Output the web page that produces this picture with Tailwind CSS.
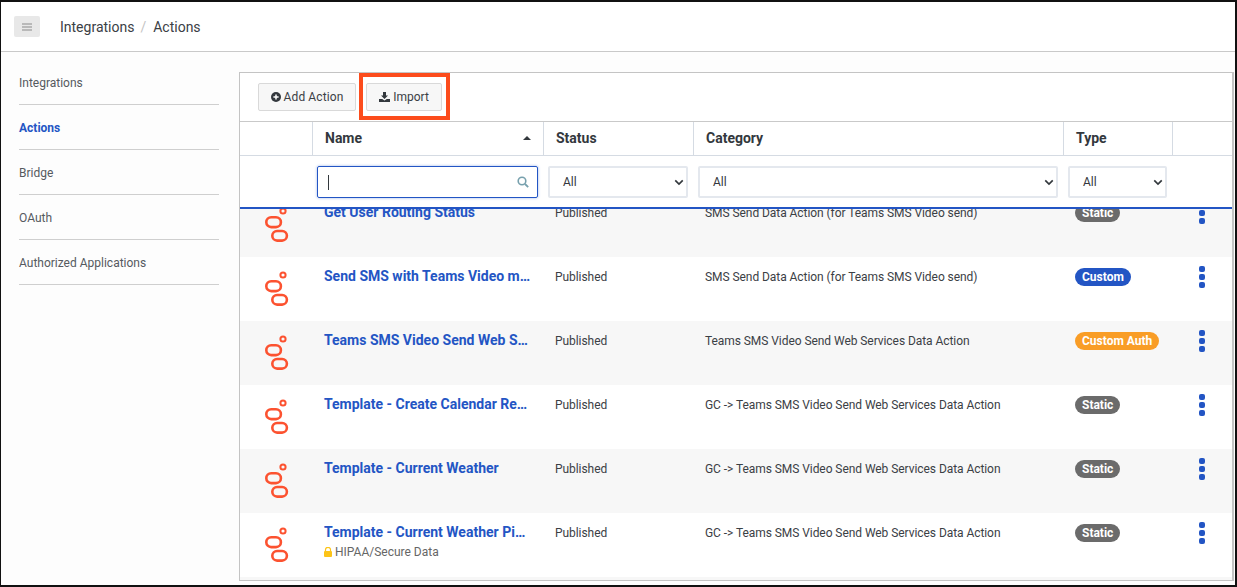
<!DOCTYPE html>
<html lang="en">
<head>
<meta charset="utf-8">
<script src="https://cdn.jsdelivr.net/npm/@tailwindcss/browser@4"></script>
<title>Actions</title>
</head>
<body class="m-0 bg-white">
<svg width="0" height="0" class="absolute">
  <defs>
    <symbol id="logo" viewBox="0 0 24 36">
      <circle cx="18" cy="4" r="2.6" fill="none" stroke="#fc5230" stroke-width="2"/>
      <rect x="1.3" y="10.3" width="14.6" height="9.8" rx="4.9" fill="none" stroke="#fc5230" stroke-width="2.6"/>
      <rect x="7.3" y="24" width="14.6" height="9.6" rx="4.8" fill="none" stroke="#fc5230" stroke-width="2.6"/>
    </symbol>
    <symbol id="dots" viewBox="0 0 7 22">
      <rect x="0" y="0" width="6" height="6" rx="2" fill="#2355c4"/>
      <rect x="0" y="8" width="6" height="6" rx="2" fill="#2355c4"/>
      <rect x="0" y="16" width="6" height="6" rx="2" fill="#2355c4"/>
    </symbol>
    <symbol id="chev" viewBox="0 0 12 8">
      <path d="M1.5 1.5 6 6l4.5-4.5" fill="none" stroke="#33383d" stroke-width="2"/>
    </symbol>
  </defs>
</svg>
<div class="w-[1237px] h-[587px] overflow-hidden flex flex-col border-l border-r-2 border-t-2 border-b-2 border-[#111] bg-[#fdfdfd] font-['Roboto',sans-serif] text-[#33383d]">
  <header class="h-[50px] shrink-0 flex items-center bg-white border-b border-[#c9c9c9]">
    <button class="ml-[13px] w-[26px] h-[21px] rounded-[2px] bg-[#e8e8e8] flex items-center justify-center">
      <svg width="10" height="8" viewBox="0 0 10 8"><path d="M0 1h10M0 4h10M0 7h10" stroke="#8a8a8a" stroke-width="1.2"/></svg>
    </button>
    <nav class="ml-[20px] flex items-center text-[14px] leading-5 text-[#3b4045]">
      <span>Integrations</span><span class="ml-[6px] text-[#c4c4c4]">/</span><span class="ml-[7px]">Actions</span>
    </nav>
  </header>
  <div class="flex-1 flex min-h-0">
    <aside class="w-[238px] shrink-0 pl-[18px] pt-[8px]">
      <ul class="w-[200px] text-[12px] leading-4 text-[#555a5f]">
        <li class="h-[45px] pt-[15px] border-b border-[#cfcfcf]">Integrations</li>
        <li class="h-[45px] pt-[15px] border-b border-[#cfcfcf] font-bold text-[#2355c4]">Actions</li>
        <li class="h-[45px] pt-[15px] border-b border-[#cfcfcf]">Bridge</li>
        <li class="h-[45px] pt-[15px] border-b border-[#cfcfcf]">OAuth</li>
        <li class="h-[45px] pt-[15px] border-b border-[#cfcfcf]">Authorized Applications</li>
      </ul>
    </aside>
    <main class="w-[995px] shrink-0 mt-[20px] mb-[4px] border border-r-2 border-[#c4c4c4] bg-white flex flex-col min-h-0">
      <div class="relative h-[49px] shrink-0 flex items-center pl-[18px] gap-[10px] bg-white border-b border-[#c9c9c9]">
        <button class="h-[28px] w-[98px] border border-[#d9d9d9] rounded-[2px] bg-[#f7f7f7] text-[12px] tracking-[0.1px] text-[#3b4045] flex items-center justify-center gap-[3px]">
          <svg width="10" height="10" viewBox="0 0 10 10"><circle cx="5" cy="5" r="5" fill="#33383d"/><path d="M5 2.4v5.2M2.4 5h5.2" stroke="#fff" stroke-width="1.5"/></svg>
          Add Action
        </button>
        <button class="h-[28px] w-[76px] border border-[#d9d9d9] rounded-[2px] bg-[#f7f7f7] text-[12px] text-[#3b4045] flex items-center justify-center gap-[3px]">
          <svg width="11" height="10" viewBox="0 0 11 10"><path d="M4 0h3v3.5h2L5.5 7 2 3.5h2z" fill="#33383d"/><path d="M0 7h3.2l2.3 1.5L7.8 7H11v3H0z" fill="#33383d"/></svg>
          Import
        </button>
        <div class="absolute left-[119px] top-0 w-[91px] h-[47px] border-[4px] border-[#fc4c1c] pointer-events-none"></div>
      </div>
      <div class="grid grid-cols-[73px_231px_150px_370px_109px_1fr] h-[34px] shrink-0 bg-white border-b border-[#d5dbe3] text-[14px] font-bold text-[#33383d] leading-5">
        <div class="border-r border-[#d5dbe3]"></div>
        <div class="border-r border-[#d5dbe3] pl-[12px] pr-[12px] pb-[2px] flex items-center justify-between">Name<svg width="8" height="4" viewBox="0 0 8 4"><path d="M0 4 4 0l4 4z" fill="#33383d"/></svg></div>
        <div class="border-r border-[#d5dbe3] pl-[12px] pb-[2px] flex items-center">Status</div>
        <div class="border-r border-[#d5dbe3] pl-[12px] pb-[2px] flex items-center">Category</div>
        <div class="border-r border-[#d5dbe3] pl-[12px] pb-[2px] flex items-center">Type</div>
        <div></div>
      </div>
      <div class="flex h-[53px] shrink-0 bg-white border-b-2 border-[#2355c4] pt-[10px] text-[12px] text-[#33383d]">
        <div class="ml-[77px] w-[221px] h-[32px] border border-[#2355c4] rounded-[2px] shadow-[0_0_3px_#9db6e8] flex items-center justify-between pl-[10px] pr-[8px]">
          <span class="w-px h-[15px] bg-[#33383d]"></span>
          <svg width="12" height="12" viewBox="0 0 12 12"><circle cx="5" cy="5" r="3.8" fill="none" stroke="#77a0ad" stroke-width="1.6"/><path d="M8 8l3.2 3.2" stroke="#77a0ad" stroke-width="1.8"/></svg>
        </div>
        <div class="ml-[10px] w-[140px] h-[32px] border-2 border-[#e4e8ee] rounded-[2px] flex items-center justify-between pl-[13px] pr-[2px]">All<svg width="10" height="7"><use href="#chev"/></svg></div>
        <div class="ml-[10px] w-[360px] h-[32px] border-2 border-[#e4e8ee] rounded-[2px] flex items-center justify-between pl-[13px] pr-[2px]">All<svg width="10" height="7"><use href="#chev"/></svg></div>
        <div class="ml-[10px] w-[99px] h-[32px] border-2 border-[#e4e8ee] rounded-[2px] flex items-center justify-between pl-[13px] pr-[2px]">All<svg width="10" height="7"><use href="#chev"/></svg></div>
      </div>
      <div class="flex-1 min-h-0 overflow-hidden text-[12px] tracking-[-0.06px] text-[#3b4045]">
        <div class="-mt-[16px]">
          <div class="grid grid-cols-[73px_231px_150px_370px_109px_1fr] h-[64px] bg-[#f7f7f7]">
            <div class="pl-[25px] pt-[14px]"><svg width="24" height="36"><use href="#logo"/></svg></div>
            <div class="pl-[11px] pt-[11px] pr-[11px] text-[14px] tracking-normal leading-[17px] font-bold text-[#2355c4] truncate">Get User Routing Status</div>
            <div class="pl-[11px] pt-[12px] leading-4">Published</div>
            <div class="pl-[11px] pt-[12px] leading-4">SMS Send Data Action (for Teams SMS Video send)</div>
            <div class="pl-[11px] pt-[11px]"><span class="inline-block h-[18px] px-[7px] rounded-full bg-[#6b6b6b] text-white font-bold text-[12px] tracking-normal leading-[18px]">Static</span></div>
            <div class="pl-[26px] pt-[9px]"><svg width="7" height="22"><use href="#dots"/></svg></div>
          </div>
          <div class="grid grid-cols-[73px_231px_150px_370px_109px_1fr] h-[64px] bg-white">
            <div class="pl-[25px] pt-[14px]"><svg width="24" height="36"><use href="#logo"/></svg></div>
            <div class="pl-[11px] pt-[11px] pr-[13px] text-[14px] tracking-normal leading-[17px] font-bold text-[#2355c4] truncate">Send SMS with Teams Video mess</div>
            <div class="pl-[11px] pt-[12px] leading-4">Published</div>
            <div class="pl-[11px] pt-[12px] leading-4">SMS Send Data Action (for Teams SMS Video send)</div>
            <div class="pl-[11px] pt-[11px]"><span class="inline-block h-[18px] px-[7px] rounded-full bg-[#2355c4] text-white font-bold text-[12px] tracking-normal leading-[18px]">Custom</span></div>
            <div class="pl-[26px] pt-[9px]"><svg width="7" height="22"><use href="#dots"/></svg></div>
          </div>
          <div class="grid grid-cols-[73px_231px_150px_370px_109px_1fr] h-[64px] bg-[#f7f7f7]">
            <div class="pl-[25px] pt-[14px]"><svg width="24" height="36"><use href="#logo"/></svg></div>
            <div class="pl-[11px] pt-[11px] pr-[13px] text-[14px] tracking-normal leading-[17px] font-bold text-[#2355c4] truncate">Teams SMS Video Send Web Serv</div>
            <div class="pl-[11px] pt-[12px] leading-4">Published</div>
            <div class="pl-[11px] pt-[12px] leading-4">Teams SMS Video Send Web Services Data Action</div>
            <div class="pl-[11px] pt-[11px]"><span class="inline-block h-[18px] px-[7px] rounded-full bg-[#f99d26] text-white font-bold text-[12px] tracking-normal leading-[18px]">Custom Auth</span></div>
            <div class="pl-[26px] pt-[9px]"><svg width="7" height="22"><use href="#dots"/></svg></div>
          </div>
          <div class="grid grid-cols-[73px_231px_150px_370px_109px_1fr] h-[64px] bg-white">
            <div class="pl-[25px] pt-[14px]"><svg width="24" height="36"><use href="#logo"/></svg></div>
            <div class="pl-[11px] pt-[11px] pr-[13px] text-[14px] tracking-normal leading-[17px] font-bold text-[#2355c4] truncate">Template - Create Calendar Remin</div>
            <div class="pl-[11px] pt-[12px] leading-4">Published</div>
            <div class="pl-[11px] pt-[12px] leading-4">GC -&gt; Teams SMS Video Send Web Services Data Action</div>
            <div class="pl-[11px] pt-[11px]"><span class="inline-block h-[18px] px-[7px] rounded-full bg-[#6b6b6b] text-white font-bold text-[12px] tracking-normal leading-[18px]">Static</span></div>
            <div class="pl-[26px] pt-[9px]"><svg width="7" height="22"><use href="#dots"/></svg></div>
          </div>
          <div class="grid grid-cols-[73px_231px_150px_370px_109px_1fr] h-[64px] bg-[#f7f7f7]">
            <div class="pl-[25px] pt-[14px]"><svg width="24" height="36"><use href="#logo"/></svg></div>
            <div class="pl-[11px] pt-[11px] pr-[13px] text-[14px] tracking-normal leading-[17px] font-bold text-[#2355c4] truncate">Template - Current Weather</div>
            <div class="pl-[11px] pt-[12px] leading-4">Published</div>
            <div class="pl-[11px] pt-[12px] leading-4">GC -&gt; Teams SMS Video Send Web Services Data Action</div>
            <div class="pl-[11px] pt-[11px]"><span class="inline-block h-[18px] px-[7px] rounded-full bg-[#6b6b6b] text-white font-bold text-[12px] tracking-normal leading-[18px]">Static</span></div>
            <div class="pl-[26px] pt-[9px]"><svg width="7" height="22"><use href="#dots"/></svg></div>
          </div>
          <div class="grid grid-cols-[73px_231px_150px_370px_109px_1fr] h-[64px] bg-white">
            <div class="pl-[25px] pt-[14px]"><svg width="24" height="36"><use href="#logo"/></svg></div>
            <div class="pl-[11px] pt-[11px] pr-[13px] min-w-0">
              <div class="text-[14px] tracking-normal leading-[17px] font-bold text-[#2355c4] truncate">Template - Current Weather Pipel</div>
              <div class="mt-[3px] flex items-center gap-[3px] text-[12px] tracking-normal leading-4 text-[#666]">
                <svg width="8" height="10" viewBox="0 0 8 10"><path d="M1.5 4V2.8a2.5 2.5 0 0 1 5 0V4" fill="none" stroke="#fcc419" stroke-width="1.2"/><rect x="0" y="4" width="8" height="6" rx="1" fill="#fcc419"/></svg>
                HIPAA/Secure Data
              </div>
            </div>
            <div class="pl-[11px] pt-[12px] leading-4">Published</div>
            <div class="pl-[11px] pt-[12px] leading-4">GC -&gt; Teams SMS Video Send Web Services Data Action</div>
            <div class="pl-[11px] pt-[11px]"><span class="inline-block h-[18px] px-[7px] rounded-full bg-[#6b6b6b] text-white font-bold text-[12px] tracking-normal leading-[18px]">Static</span></div>
            <div class="pl-[26px] pt-[9px]"><svg width="7" height="22"><use href="#dots"/></svg></div>
          </div>
          <div class="h-[10px] bg-[#f7f7f7]"></div>
        </div>
      </div>
    </main>
  </div>
</div>
</body>
</html>
